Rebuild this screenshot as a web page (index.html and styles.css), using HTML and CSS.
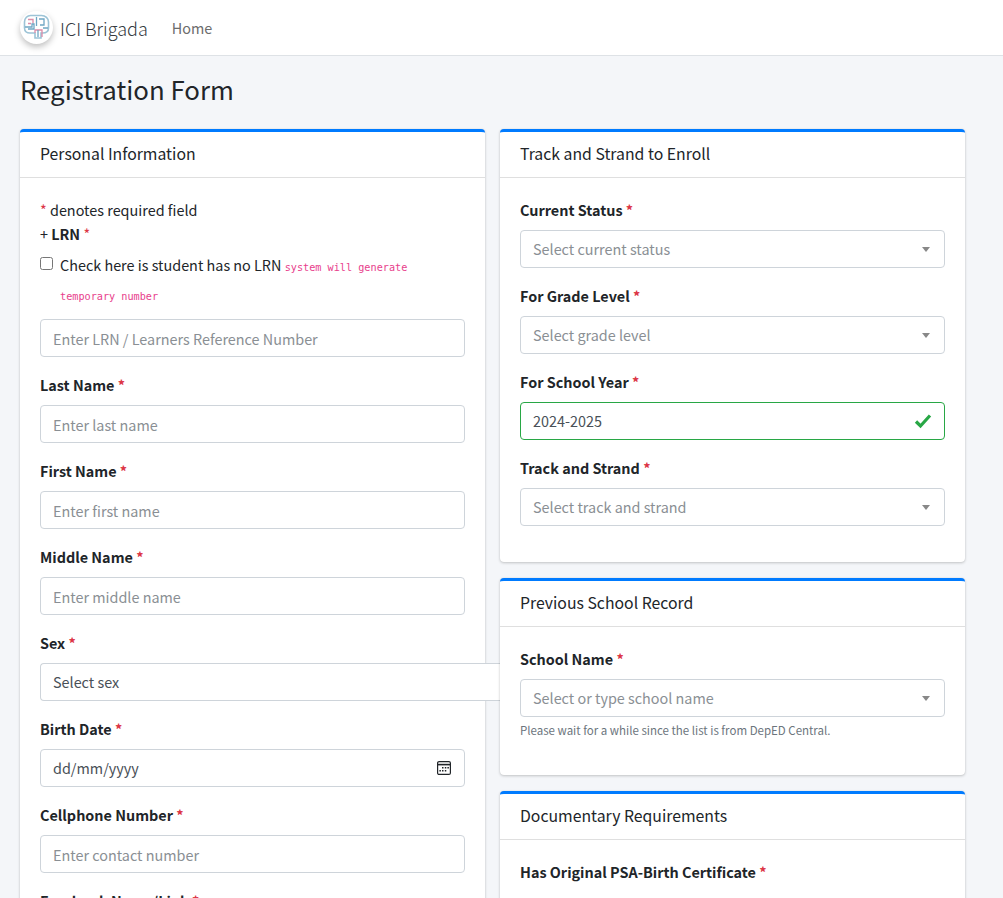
FILE: index.html
```html
<!DOCTYPE html>
<html lang="en">
<head>
<meta charset="utf-8">
<title>Registration Form</title>
<link rel="stylesheet" href="styles.css">
</head>
<body>
<nav class="navbar">
  <a class="brand" href="#">
    <span class="logo">
      <svg viewBox="0 0 33 33" width="33" height="33" fill="none" stroke-width="1.3">
        <path stroke="#9cc3d6" stroke-width="1.6" d="M4.500 11c0-4 3-6.500 6-6.500h11c4 0 7 3 7 6.500v6c0 4-3 5-6 5h-1.500v5h-6v-5h-5c-3 0-5.500-1.500-5.500-5z"/>
        <path stroke="#dc8ca8" d="M8 8.500h5v4M8 12.500h3M15 22v-3h7v7"/>
        <path stroke="#6fa6c4" d="M5 16h7v-3h2v5h-6M16.500 6v9M19 8h5v6h-4M23 17h5M18 19v7"/>
      </svg>
    </span>
    <span class="brand-text">ICI Brigada</span>
  </a>
  <a class="nav-link" href="#">Home</a>
</nav>
<main class="content">
  <h1 class="page-title">Registration Form</h1>
  <div class="columns">
    <div class="col">
      <section class="card">
        <h2 class="card-header">Personal Information</h2>
        <div class="card-body">
          <p class="note"><span class="req">*</span> denotes required field</p>
          <p class="note">+ <b>LRN</b> <span class="req">*</span></p>
          <div class="check-row">
            <input type="checkbox" class="check">
            <span class="check-label">Check here is student has no LRN <code class="hint">system will generate temporary number</code></span>
          </div>
          <div class="group"><input class="control" placeholder="Enter LRN / Learners Reference Number"></div>
          <div class="group"><label class="lbl">Last Name <span class="req">*</span></label><input class="control" placeholder="Enter last name"></div>
          <div class="group"><label class="lbl">First Name <span class="req">*</span></label><input class="control" placeholder="Enter first name"></div>
          <div class="group"><label class="lbl">Middle Name <span class="req">*</span></label><input class="control" placeholder="Enter middle name"></div>
          <div class="group"><label class="lbl">Sex <span class="req">*</span></label><div class="control sex">Select sex</div></div>
          <div class="group"><label class="lbl">Birth Date <span class="req">*</span></label>
            <div class="control date"><span>dd/mm/yyyy</span>
              <svg width="16" height="16" viewBox="0 0 16 16" fill="none" stroke="#212529" stroke-width="1.2"><rect x="1.600" y="1.600" width="12.800" height="12.800" rx="1.500"/><path d="M1.600 4.600h12.800" stroke-width="1.600"/><path d="M6 7.800h1.500M8.800 7.800h1.500M11.400 7.800h1.500M3.400 10.800h1.500M6 10.800h1.500M8.800 10.800h1.500" stroke-width="1.500"/></svg>
            </div></div>
          <div class="group"><label class="lbl">Cellphone Number <span class="req">*</span></label><input class="control" placeholder="Enter contact number"></div>
          <div class="group"><label class="lbl">Facebook Name/Link <span class="req">*</span></label><input class="control" placeholder="Enter facebook name"></div>
        </div>
      </section>
    </div>
    <div class="col">
      <section class="card">
        <h2 class="card-header">Track and Strand to Enroll</h2>
        <div class="card-body body-tight">
          <div class="group"><label class="lbl">Current Status <span class="req">*</span></label><div class="control select"><span>Select current status</span><i class="caret"></i></div></div>
          <div class="group"><label class="lbl">For Grade Level <span class="req">*</span></label><div class="control select"><span>Select grade level</span><i class="caret"></i></div></div>
          <div class="group"><label class="lbl">For School Year <span class="req">*</span></label>
            <div class="control valid"><span>2024-2025</span>
              <svg width="18" height="16" viewBox="0 0 18 16" fill="none" stroke="#28a745" stroke-width="3.200"><path d="M2 8.500l4.500 4.500L16 2.500"/></svg>
            </div></div>
          <div class="group"><label class="lbl">Track and Strand <span class="req">*</span></label><div class="control select"><span>Select track and strand</span><i class="caret"></i></div></div>
        </div>
      </section>
      <section class="card">
        <h2 class="card-header">Previous School Record</h2>
        <div class="card-body">
          <div class="group"><label class="lbl">School Name <span class="req">*</span></label><div class="control select"><span>Select or type school name</span><i class="caret"></i></div>
          <small class="help">Please wait for a while since the list is from DepED Central.</small></div>
        </div>
      </section>
      <section class="card">
        <h2 class="card-header">Documentary Requirements</h2>
        <div class="card-body">
          <div class="group"><label class="lbl">Has Original PSA-Birth Certificate <span class="req">*</span></label></div>
        </div>
      </section>
    </div>
  </div>
</main>
</body>
</html>
```

FILE: styles.css
```css
* { box-sizing: border-box; }
html, body { height: 898px; overflow: hidden; }
body {
  margin: 0;
  background: #f4f6f9;
  color: #212529;
  font-family: "Noto Sans CJK SC", "Noto Sans", "Liberation Sans", sans-serif;
  font-size: 14.4px;
  line-height: 24px;
}
.navbar {
  height: 56px;
  background: #fff;
  border-bottom: 1px solid #dee2e6;
  display: flex;
  align-items: center;
  padding: 0 20px;
}
.brand { display: flex; align-items: center; text-decoration: none; color: #343a40; }
.logo {
  width: 33px; height: 33px;
  border-radius: 50%;
  box-shadow: 0 3px 6px rgba(0,0,0,.25);
  background: #fff;
  margin-right: 7px;
  display: flex;
}
.brand-text { font-size: 18px; font-weight: 300; }
.nav-link { margin-left: 24px; color: #6c6c6c; text-decoration: none; }
.content { padding: 0 20px; }
.page-title { margin: 0; padding: 16px 0 23px; font-size: 25.8px; font-weight: 400; line-height: 34px; }
.columns { display: flex; gap: 15px; align-items: flex-start; padding-right: 18px; }
.col { flex: 1 1 0; min-width: 0; }
.card {
  background: #fff;
  border-top: 3px solid #007bff;
  border-radius: 4px;
  box-shadow: 0 0 1px rgba(0,0,0,.13), 0 1px 3px rgba(0,0,0,.2);
  margin-bottom: 16px;
}
.card-header {
  margin: 0;
  padding: 10px 20px 11px;
  font-size: 15.8px;
  font-weight: 400;
  line-height: 24px;
  border-bottom: 1px solid rgba(0,0,0,.125);
}
.card-body { padding: 20px; }
.body-tight { padding-bottom: 20px; }
.note { margin: 0; line-height: 24px; }
.req { color: #dc3545; }
.check-row { display: flex; margin-top: 6px; margin-bottom: 9px; }
.check { margin: 5px 7px 0 0; width: 13px; height: 13px; flex: none; }
.check-label { line-height: 26px; }
.hint { font-family: "DejaVu Sans Mono", monospace; font-size: 10.2px; color: #e83e8c; }
.group { margin-bottom: 16px; }
.lbl { display: block; font-weight: 700; line-height: 24px; margin-bottom: 8px; }
.control {
  display: flex;
  align-items: center;
  justify-content: space-between;
  width: 100%;
  height: 38px;
  padding: 6px 12px;
  border: 1px solid #ced4da;
  border-radius: 4px;
  background: #fff;
  font-family: inherit;
  font-size: 14.4px;
  color: #495057;
}
.control::placeholder { color: #8a8f94; opacity: 1; }
.select { color: #8a8f94; padding-right: 14px; }
.caret { width: 0; height: 0; border-left: 4px solid transparent; border-right: 4px solid transparent; border-top: 5px solid #888; }
.valid { border-color: #28a745; }
.sex { width: calc(100% + 40px); border-right: 0; border-radius: 4px 0 0 4px; }
.help { display: block; margin-top: 4px; font-size: 11.5px; line-height: 18px; color: #6c757d; }
```
